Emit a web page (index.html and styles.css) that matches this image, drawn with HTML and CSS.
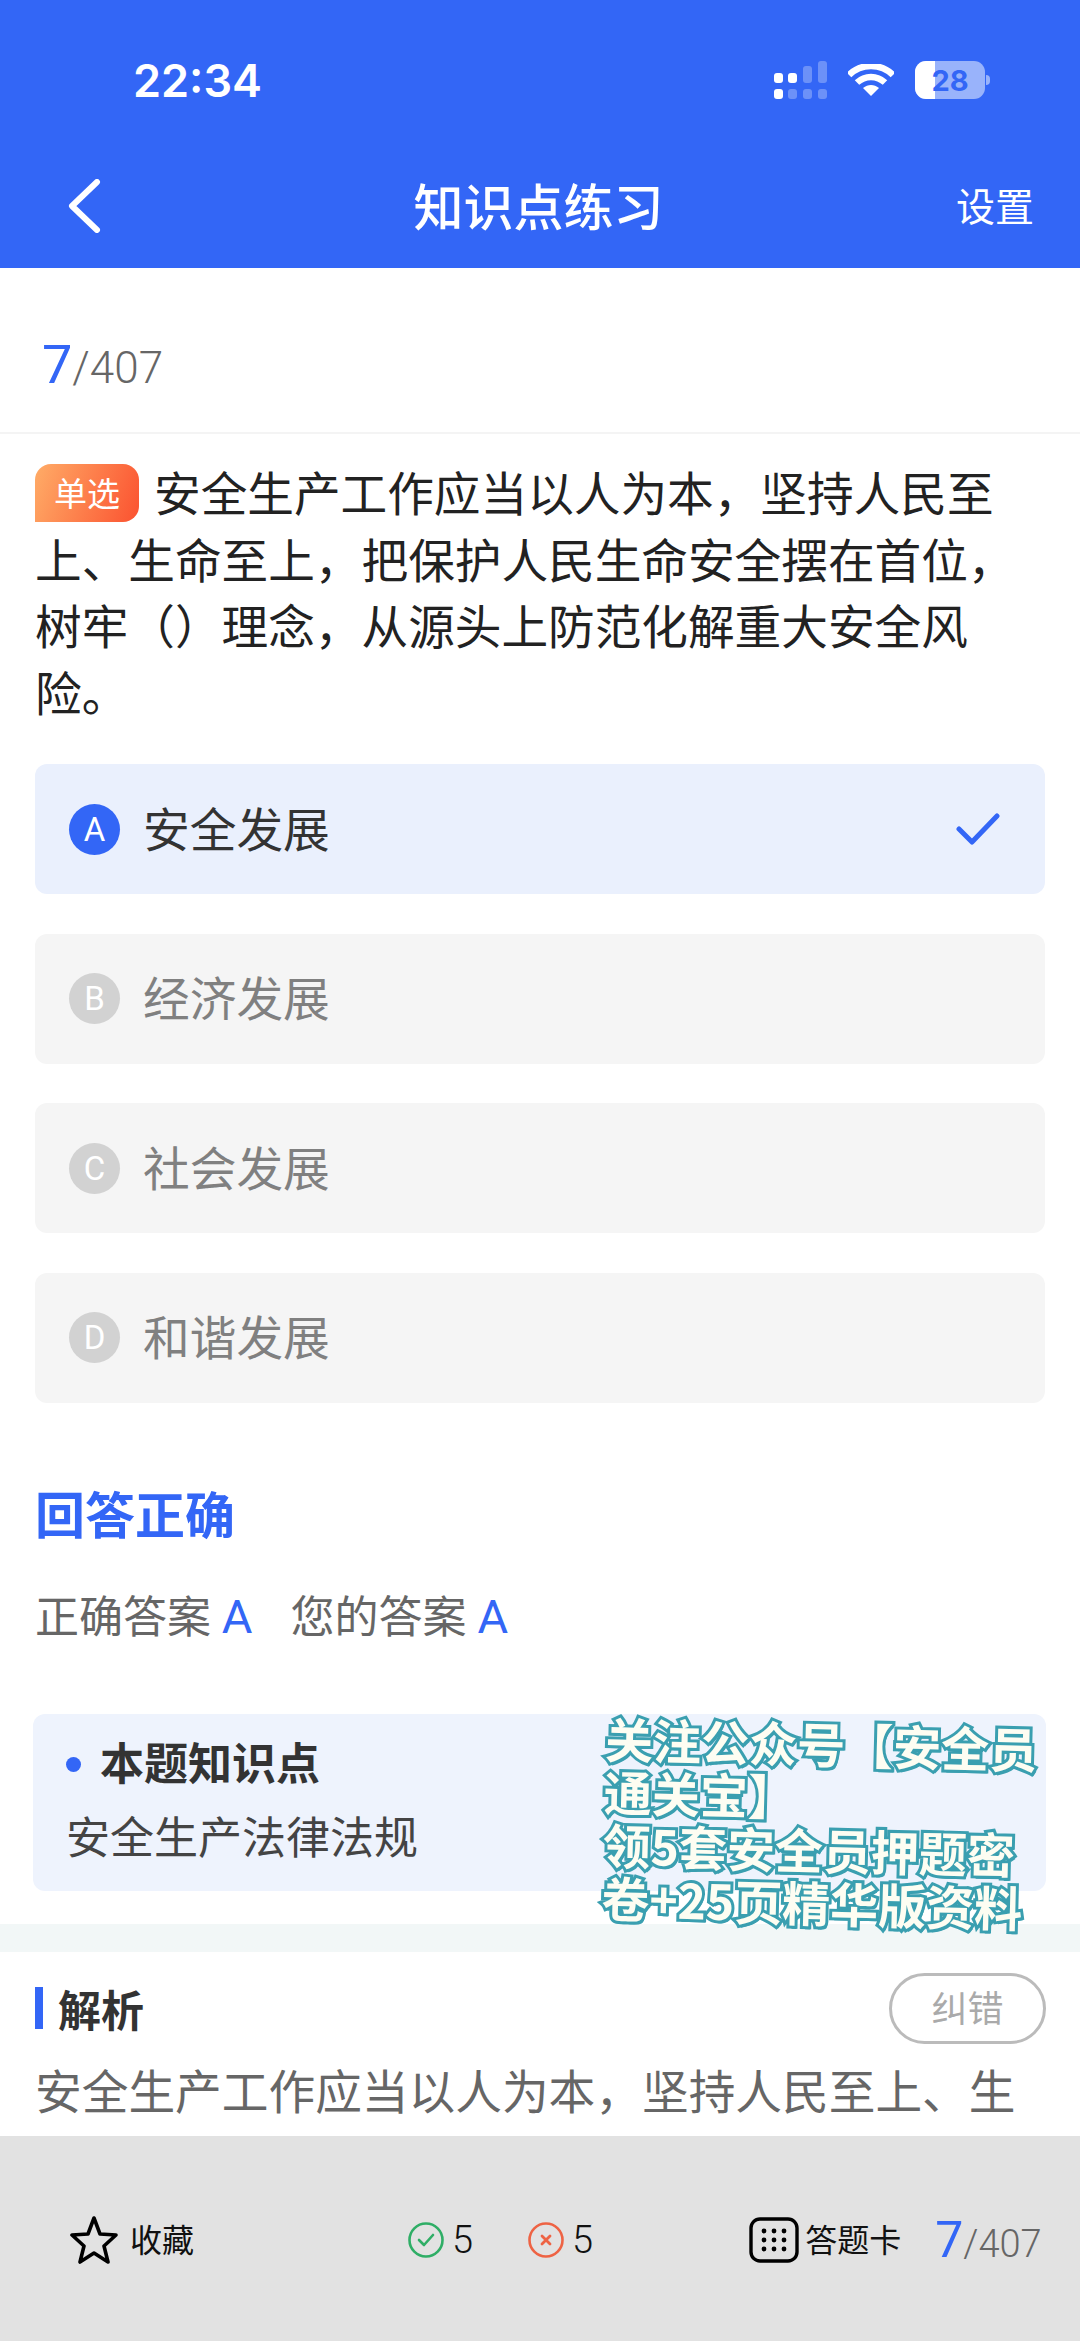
FILE: index.html
```html
<!DOCTYPE html>
<html lang="zh-CN">
<head>
  <meta charset="UTF-8" />
  <meta name="viewport" content="width=device-width, initial-scale=1.0" />
  <title>知识点练习</title>
  <link rel="stylesheet" href="styles.css">
</head>
<body>
  <header class="top">
    <div class="status">
      <span class="time">22:34</span>
      <div class="status-icons">
        <svg class="signal" width="53" height="38" viewBox="0 0 53 38">
          <g fill="#fff">
            <rect x="0" y="12" width="9" height="10" rx="3"/>
            <rect x="14" y="12" width="9" height="10" rx="3"/>
            <rect x="0" y="28" width="9" height="10" rx="3"/>
          </g>
          <g fill="#fff" opacity=".28">
            <rect x="29" y="5" width="9" height="17" rx="3"/>
            <rect x="44" y="0" width="9" height="22" rx="3"/>
            <rect x="14" y="28" width="9" height="10" rx="3"/>
            <rect x="29" y="28" width="9" height="10" rx="3"/>
            <rect x="44" y="28" width="9" height="10" rx="3"/>
          </g>
        </svg>
        <svg class="wifi" width="46" height="32" viewBox="0 0 46 32">
          <path d="M1 11 C13 -1 33 -1 45 11" fill="none" stroke="#fff" stroke-width="6.5"/>
          <path d="M9 18.5 C17 11 29 11 37 18.5" fill="none" stroke="#fff" stroke-width="6.5"/>
          <path d="M15 24 C20 20 26 20 31 24 L23 32 Z" fill="#fff"/>
        </svg>
        <div class="battery">
          <div class="battery-level"></div>
          <span class="battery-num">28</span>
        </div>
        <div class="battery-nub"></div>
      </div>
    </div>
    <nav class="nav">
      <svg class="back" width="36" height="54" viewBox="0 0 36 54">
        <path d="M31 3 L6 27 L31 51" fill="none" stroke="#fff" stroke-width="6" stroke-linecap="round" stroke-linejoin="round"/>
      </svg>
      <h1 class="nav-title">知识点练习</h1>
      <span class="nav-action">设置</span>
    </nav>
  </header>

  <main class="content">
    <div class="progress"><b>7</b>/407</div>

    <p class="question"><span class="tag">单选</span>安全生产工作应当以人为本，坚持人民至上、生命至上，把保护人民生命安全摆在首位，树牢（）理念，从源头上防范化解重大安全风险。</p>

    <div class="options">
      <div class="option selected">
        <span class="letter">A</span>
        <span class="option-text">安全发展</span>
        <svg class="tick" width="44" height="34" viewBox="0 0 44 34">
          <path d="M3 17 L16 30 L41 4" fill="none" stroke="#3366f6" stroke-width="5" stroke-linecap="round" stroke-linejoin="round"/>
        </svg>
      </div>
      <div class="option">
        <span class="letter">B</span>
        <span class="option-text">经济发展</span>
      </div>
      <div class="option">
        <span class="letter">C</span>
        <span class="option-text">社会发展</span>
      </div>
      <div class="option">
        <span class="letter">D</span>
        <span class="option-text">和谐发展</span>
      </div>
    </div>

    <h2 class="result">回答正确</h2>
    <div class="answers">
      <span>正确答案 <b>A</b></span>
      <span>您的答案 <b>A</b></span>
    </div>

    <div class="point">
      <div class="point-title">本题知识点</div>
      <div class="point-text">安全生产法律法规</div>
    </div>

    <div class="band"></div>

    <div class="analysis-head">
      <h3 class="analysis-title">解析</h3>
      <span class="report">纠错</span>
    </div>
    <p class="analysis-text">安全生产工作应当以人为本，坚持人民至上、生</p>
  </main>

  <footer class="bar">
    <div class="bar-fav">
      <svg width="48" height="50" viewBox="0 0 48 50">
        <path d="M24 3 L30 19 L46 20 L34 31 L38 47 L24 38 L10 47 L14 31 L2 20 L18 19 Z" fill="none" stroke="#000" stroke-width="3.6" stroke-linejoin="round"/>
      </svg>
      <span>收藏</span>
    </div>
    <div class="bar-stat first">
      <svg width="36" height="36" viewBox="0 0 36 36">
        <circle cx="18" cy="18" r="16.5" fill="none" stroke="#2fae66" stroke-width="2.6"/>
        <path d="M11 18 L16 23 L25 13" fill="none" stroke="#2fae66" stroke-width="2.6" stroke-linecap="round" stroke-linejoin="round"/>
      </svg>
      <span>5</span>
    </div>
    <div class="bar-stat">
      <svg width="36" height="36" viewBox="0 0 36 36">
        <circle cx="18" cy="18" r="16.5" fill="none" stroke="#ee6344" stroke-width="2.6"/>
        <path d="M14 14 L22 22 M22 14 L14 22" fill="none" stroke="#ee6344" stroke-width="2.8" stroke-linecap="round"/>
      </svg>
      <span>5</span>
    </div>
    <div class="bar-card">
      <svg width="50" height="46" viewBox="0 0 50 46">
        <rect x="2" y="2" width="46" height="42" rx="9" fill="none" stroke="#000" stroke-width="3.4"/>
        <g fill="#000">
          <circle cx="15" cy="14" r="2.4"/><circle cx="25" cy="14" r="2.4"/><circle cx="35" cy="14" r="2.4"/>
          <circle cx="15" cy="23" r="2.4"/><circle cx="25" cy="23" r="2.4"/><circle cx="35" cy="23" r="2.4"/>
          <circle cx="15" cy="32" r="2.4"/><circle cx="25" cy="32" r="2.4"/><circle cx="35" cy="32" r="2.4"/>
        </g>
      </svg>
      <span>答题卡</span>
    </div>
    <div class="progress bar-progress"><b>7</b>/407</div>
  </footer>

  <!-- promo text stuck over the page -->
  <div class="promo">关注公众号【安全员<br>通关宝】<br>领5套安全员押题密<br>卷+25页精华版资料</div>
</body>
</html>
```

FILE: styles.css
```css
* {
  box-sizing: border-box;
}

body {
  margin: 0;
  height: 2341px;
  overflow: hidden;
  position: relative;
  display: flex;
  flex-direction: column;
  background: #fff;
  color: #222;
  font-family: "Noto Sans CJK SC", "Noto Sans", sans-serif;
}

/* Top */
.top {
  height: 268px;
  padding-top: 50px;
  background: #3366f6;
  color: #fff;
  flex-shrink: 0;
}

.status {
  height: 60px;
  padding: 0 90px 0 133px;
  display: flex;
  align-items: center;
  justify-content: space-between;
}

.time {
  font-family: Inter, sans-serif;
  font-size: 45px;
  font-weight: 600;
}

.status-icons {
  display: flex;
  align-items: center;
}

.signal {
  margin-right: 21px;
}

.wifi {
  margin-right: 21px;
}

.battery {
  width: 70px;
  height: 38px;
  border-radius: 11px;
  background: rgba(255, 255, 255, 0.5);
  position: relative;
  overflow: hidden;
  display: flex;
  align-items: center;
  justify-content: center;
}

.battery-level {
  position: absolute;
  left: 0;
  top: 0;
  bottom: 0;
  width: 20px;
  background: #fff;
}

.battery-num {
  position: relative;
  font-family: Inter, sans-serif;
  font-size: 29px;
  font-weight: 700;
  color: #3366f6;
}

.battery-nub {
  width: 4px;
  height: 10px;
  margin-left: 1px;
  border-radius: 0 4px 4px 0;
  background: rgba(255, 255, 255, 0.5);
}

.nav {
  margin-top: 56px;
  height: 76px;
  padding: 0 46px 0 43px;
  display: grid;
  grid-template-columns: 1fr auto 1fr;
  align-items: center;
}

.back {
  margin: 3px 0 0 23px;
}

.nav-title {
  margin: 0;
  font-size: 50px;
  font-weight: 500;
}

.nav-action {
  justify-self: end;
  font-size: 39px;
}

/* Content */
.content {
  flex: 1;
  min-height: 0;
  overflow: hidden;
}

.progress {
  height: 166px;
  padding: 65px 0 0 42px;
  border-bottom: 2px solid #f4f4f4;
  color: #666;
  font-family: Roboto, sans-serif;
  font-size: 44px;
  font-weight: 300;
}

.progress b {
  color: #3366f6;
  font-size: 54px;
  font-weight: 400;
}

.question {
  margin: 24px 36px 0 35px;
  font-size: 46.65px;
  line-height: 66.5px;
  color: #222;
}

.tag {
  display: inline-block;
  width: 104px;
  height: 58px;
  margin-right: 15px;
  border-radius: 16px 16px 16px 0;
  background: linear-gradient(110deg, #ffac67, #fb5230);
  color: #fff;
  font-size: 33px;
  line-height: 56px;
  text-align: center;
  vertical-align: 5px;
}

.options {
  margin: 40px 35px 0;
  display: flex;
  flex-direction: column;
  gap: 39.5px;
}

.option {
  height: 130px;
  padding: 0 45px 0 34px;
  padding-bottom: 6px;
  display: flex;
  align-items: center;
  border-radius: 12px;
  background: #f5f5f5;
  color: #808080;
  font-size: 46.7px;
}

.letter {
  width: 51px;
  height: 51px;
  margin-top: 6px;
  margin-right: 23px;
  border-radius: 50%;
  background: #d2d2d2;
  color: #fff;
  font-family: Roboto, sans-serif;
  font-size: 33px;
  font-weight: 400;
  line-height: 51px;
  text-align: center;
}

.option-text {
  flex: 1;
}

.tick {
  margin-top: 6px;
}

.option.selected {
  background: #eaf0fd;
  color: #333;
}

.option.selected .letter {
  background: #3366f6;
}

.result {
  margin: 79px 35px 0;
  color: #3366f6;
  font-size: 50px;
  font-weight: 700;
  line-height: 60px;
}

.answers {
  margin: 42px 35px 0;
  display: flex;
  gap: 38px;
  color: #666;
  font-size: 44px;
  line-height: 60px;
}

.answers b {
  margin-left: 1px;
  color: #3366f6;
  font-family: Roboto, sans-serif;
  font-size: 47px;
  font-weight: 400;
}

.point {
  height: 177px;
  margin: 67px 34px 0 33px;
  padding: 17px 0 0 33px;
  border-radius: 12px;
  background: #eef3fd;
}

.point-title {
  position: relative;
  padding-left: 34px;
  font-size: 44px;
  font-weight: 700;
  line-height: 60px;
  color: #333;
}

.point-title::before {
  content: "";
  position: absolute;
  left: 0;
  top: 26px;
  width: 15px;
  height: 15px;
  border-radius: 50%;
  background: #3366f6;
}

.point-text {
  margin-top: 14px;
  font-size: 44px;
  line-height: 60px;
  color: #444;
}

.band {
  height: 28px;
  margin-top: 33px;
  background: #f2f7f7;
}

.analysis-head {
  margin: 21px 34px 0 35px;
  display: flex;
  align-items: center;
  justify-content: space-between;
}

.analysis-title {
  margin: 0;
  padding-left: 15px;
  border-left: 8px solid #3366f6;
  font-size: 43px;
  font-weight: 700;
  line-height: 42px;
  color: #333;
}

.report {
  width: 157px;
  height: 71px;
  border: 3px solid #bbb;
  border-radius: 36px;
  color: #aaa;
  font-size: 36px;
  line-height: 60px;
  text-align: center;
}

.analysis-text {
  margin: 12px 36px 0 35px;
  color: #666;
  font-size: 46.7px;
  line-height: 66px;
  white-space: nowrap;
}

/* Bottom bar */
.bar {
  height: 205px;
  padding: 3px 0 0 70px;
  display: flex;
  align-items: center;
  background: #e2e2e2;
  color: #111;
  white-space: nowrap;
  flex-shrink: 0;
}

.bar-fav,
.bar-stat,
.bar-card {
  display: flex;
  align-items: center;
  flex-shrink: 0;
  font-size: 32px;
}

.bar-fav span,
.bar-card span {
  padding-bottom: 5px;
}

.bar-fav svg {
  margin-right: 12px;
}

.bar-stat {
  margin-left: 55px;
  font-family: Roboto, sans-serif;
  font-size: 38px;
  font-weight: 300;
}

.bar-stat.first {
  margin-left: 214px;
}

.bar-stat svg {
  margin-right: 8px;
}

.bar-card {
  margin-left: 156px;
}

.bar-card svg {
  margin-right: 6px;
}

.bar-progress {
  height: auto;
  margin-left: 34px;
  padding: 0;
  border: 0;
  font-size: 38px;
}

.bar-progress b {
  font-size: 50px;
}

/* Promo sticker */
.promo {
  position: absolute;
  left: 606px;
  top: 1711px;
  width: 450px;
  font-size: 48px;
  font-weight: 700;
  line-height: 53px;
  color: #fdfdf2;
  -webkit-text-stroke: 6px #3a9fb0;
  paint-order: stroke fill;
  text-shadow: 2px 3px 0 #3a9fb0;
  transform: rotate(1.4deg);
  transform-origin: left top;
}
```
